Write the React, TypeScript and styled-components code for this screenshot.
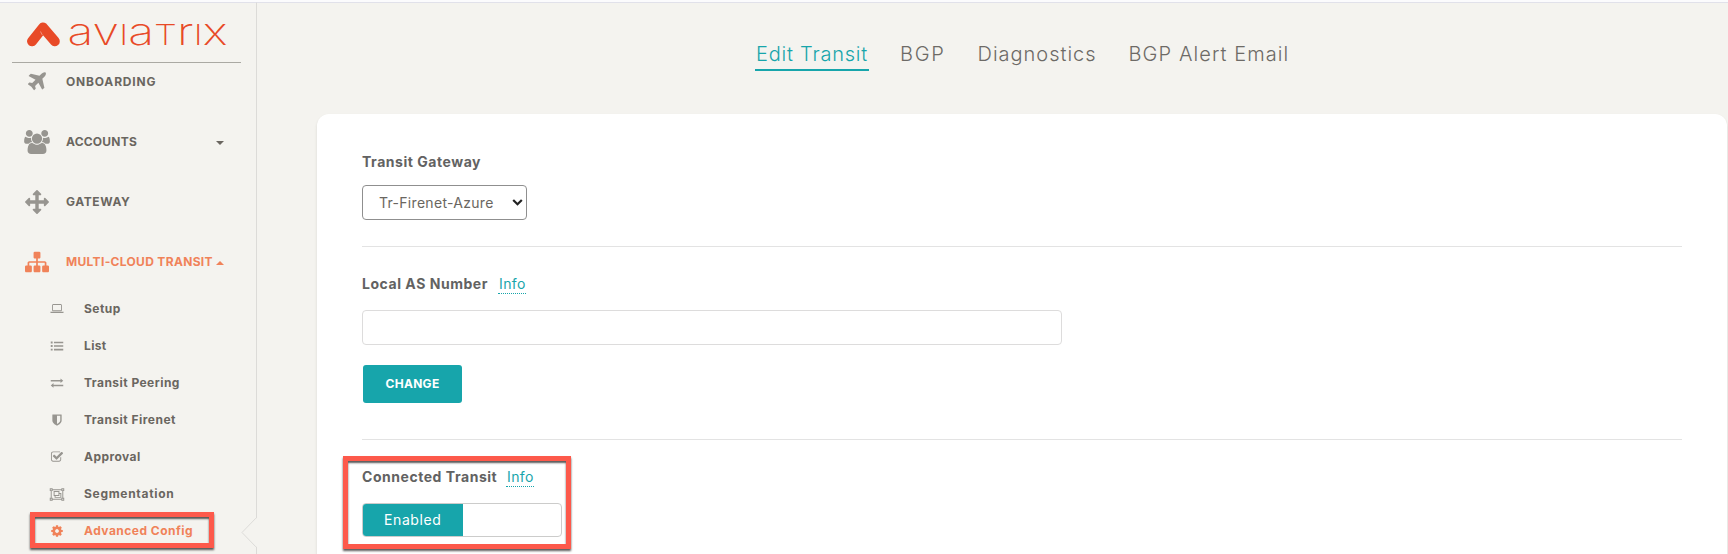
import React from 'react';
import styled, { createGlobalStyle } from 'styled-components';

const teal = '#17a5ab';
const orange = '#f08259';
const grey = '#6a6660';

const GlobalStyle = createGlobalStyle`
  * { box-sizing: border-box; }
  body {
    margin: 0;
    overflow: hidden;
    background: #f4f3ef;
    color: ${grey};
    font-family: Inter, "Open Sans", sans-serif;
  }
`;

const Page = styled.div`
  display: flex;
  height: 554px;
  overflow: hidden;
  border-top: 2px solid #fbfbfd;
  background: #f4f3ef;
`;

const Sidebar = styled.aside`
  position: relative;
  flex: none;
  width: 257px;
  border-top: 1px solid #e1e1ea;
  border-right: 1px solid #dcdbd8;
`;

const Brand = styled.header`
  height: 60px;
  margin: 0 15px 0 12px;
  border-bottom: 1px solid #aaa9a3;
  svg { display: block; }
`;

const Menu = styled.nav`
  display: flex;
  flex-direction: column;
  gap: 22px;
`;

const MenuItem = styled.a<{ $active?: boolean }>`
  display: flex;
  align-items: center;
  height: 38px;
  padding: 0 32px 0 22px;
  color: ${(p) => (p.$active ? orange : grey)};
  > svg { flex: none; margin-right: 14px; fill: ${(p) => (p.$active ? orange : '#979590')}; }
`;

const MenuLabel = styled.span<{ $spacing: number }>`
  padding-bottom: 2px;
  font-size: 12px;
  font-weight: 700;
  letter-spacing: ${(p) => p.$spacing}px;
  white-space: nowrap;
`;

const Caret = styled.i<{ $up?: boolean }>`
  margin-left: auto;
  margin-top: 2px;
  border: 4px solid transparent;
  ${(p) => (p.$up ? 'border-top: 0; border-bottom' : 'border-bottom: 0; border-top')}: 4px solid currentColor;
`;

const SubMenu = styled.div`
  margin-top: 9px;
`;

const SubItem = styled.a<{ $active?: boolean; $spacing: number }>`
  display: flex;
  align-items: center;
  height: 37px;
  padding-left: 49px;
  color: ${(p) => (p.$active ? orange : grey)};
  font-size: 12px;
  font-weight: 700;
  letter-spacing: ${(p) => p.$spacing}px;
  > svg { flex: none; margin-right: 19px; fill: ${(p) => (p.$active ? orange : '#979590')}; }
`;

const Notch = styled.svg`
  position: absolute;
  right: -1px;
  top: 513px;
`;

const Main = styled.main`
  flex: 1;
  display: flex;
  flex-direction: column;
  border-top: 1px solid #e1e1ea;
`;

const Tabs = styled.nav`
  display: flex;
  flex: none;
  gap: 30px;
  height: 111px;
  padding: 35px 0 0 498px;
`;

const Tab = styled.a<{ $active?: boolean; $spacing: number }>`
  height: 33px;
  padding: 0 1px;
  line-height: 33px;
  font-size: 20px;
  font-weight: 350;
  letter-spacing: ${(p) => p.$spacing}px;
  white-space: nowrap;
  color: ${(p) => (p.$active ? teal : '#6d6a66')};
  border-bottom: 2px solid ${(p) => (p.$active ? teal : 'transparent')};
`;

const Card = styled.section`
  flex: 1;
  margin: 0 1px 0 60px;
  padding: 0 45px;
  border-radius: 12px 12px 0 0;
  background: #fff;
  box-shadow: 0 2px 3px rgba(60, 55, 50, 0.14);
`;

const Field = styled.div<{ $height: number; $top: number }>`
  height: ${(p) => p.$height}px;
  padding-top: ${(p) => p.$top}px;
  border-bottom: 1px solid #e3e3e3;
  &:last-child { border-bottom: 0; }
`;

const LabelRow = styled.div`
  display: flex;
  height: 20px;
  line-height: 20px;
  font-size: 14px;
`;

const Label = styled.label<{ $width: number }>`
  width: ${(p) => p.$width}px;
  color: #626262;
  font-weight: 700;
  letter-spacing: 0.54px;
  white-space: nowrap;
`;

const InfoLink = styled.a`
  height: 20px;
  padding-left: 1px;
  color: ${teal};
  font-weight: 400;
  letter-spacing: 0.4px;
  border-bottom: 1px dotted ${teal};
`;

const SelectBox = styled.div`
  display: flex;
  align-items: center;
  justify-content: space-between;
  width: 165px;
  height: 35px;
  margin-top: 13px;
  padding: 0 3px 0 16px;
  border: 1px solid #8f8f8f;
  border-radius: 4px;
  font-size: 14px;
  letter-spacing: 0.3px;
`;

const TextInput = styled.input`
  display: block;
  width: 700px;
  height: 35px;
  margin-top: 16px;
  border: 1px solid #dddcdc;
  border-radius: 4px;
  outline: none;
`;

const Button = styled.button`
  display: block;
  width: 99px;
  height: 38px;
  margin: 20px 0 0 1px;
  padding: 0 0 2px;
  border: 0;
  border-radius: 3px;
  background: ${teal};
  color: #fff;
  font: 700 12px Inter, sans-serif;
  letter-spacing: 0.3px;
`;

const Toggle = styled.div`
  width: 200px;
  height: 34px;
  margin-top: 16px;
  border: 1px solid #cccccb;
  border-radius: 4px;
  overflow: hidden;
`;

const ToggleOn = styled.div`
  width: 100px;
  height: 32px;
  padding-left: 21px;
  background: ${teal};
  color: #fff;
  font-size: 14px;
  line-height: 32px;
  letter-spacing: 0.6px;
`;

const Highlight = styled.div<{ $x: number; $y: number; $w: number; $h: number }>`
  position: absolute;
  left: ${(p) => p.$x}px;
  top: ${(p) => p.$y}px;
  width: ${(p) => p.$w}px;
  height: ${(p) => p.$h}px;
  border: 5px solid #fd594b;
  box-shadow: 0 2px 2px rgba(0, 0, 0, 0.65), inset 0 2px 2px rgba(0, 0, 0, 0.65);
`;

const icons: Record<string, string> = {
  plane: 'M1568 160q44 52 12 148t-108 172l-161 161 160 696q5 19-12 33l-128 96q-7 6-19 6-4 0-7-1-15-3-21-16l-279-508-259 259 53 194q5 17-8 31l-96 96q-9 9-23 9h-2q-15-2-24-13l-189-252-252-189q-11-7-13-23-1-13 9-25l96-97q9-9 23-9 6 0 8 1l194 53 259-259-508-279q-14-8-17-24-2-16 9-27l128-128q14-13 30-8l665 159 160-160q76-76 172-108t148 12z',
  users: 'M593 896q-162 5-265 128h-134q-82 0-138-40.5t-56-118.5q0-353 124-353 6 0 43.5 21t97.5 42.5 119 21.5q67 0 133-23-5 37-5 66 0 139 81 256zm1071 637q0 120-73 189.500t-194 69.500h-874q-121 0-194-69.500t-73-189.500q0-53 3.5-103.500t14-109 26.5-108.500 43-97.500 62-81 85.500-53.500 111.500-20q10 0 43 21.500t73 48 107 48 135 21.500 135-21.500 107-48 73-48 43-21.500q61 0 111.500 20t85.500 53.500 62 81 43 97.500 26.500 108.500 14 109 3.500 103.500zm-1024-1277q0 106-75 181t-181 75-181-75-75-181 75-181 181-75 181 75 75 181zm704 384q0 159-112.500 271.500t-271.500 112.500-271.500-112.500-112.500-271.500 112.500-271.500 271.500-112.500 271.500 112.500 112.500 271.500zm576 225q0 78-56 118.500t-138 40.500h-134q-103-123-265-128 81-117 81-256 0-29-5-66 66 23 133 23 59 0 119-21.500t97.500-42.500 43.500-21q124 0 124 353zm-128-609q0 106-75 181t-181 75-181-75-75-181 75-181 181-75 181 75 75 181z',
  arrows: 'M1792 896q0 26-19 45l-256 256q-19 19-45 19t-45-19-19-45v-128h-384v384h128q26 0 45 19t19 45-19 45l-256 256q-19 19-45 19t-45-19l-256-256q-19-19-19-45t19-45 45-19h128v-384h-384v128q0 26-19 45t-45 19-45-19l-256-256q-19-19-19-45t19-45l256-256q19-19 45-19t45 19 19 45v128h384v-384h-128q-26 0-45-19t-19-45 19-45l256-256q19-19 45-19t45 19l256 256q19 19 19 45t-19 45-45 19h-128v384h384v-128q0-26 19-45t45-19 45 19l256 256q19 19 19 45z',
  sitemap: 'M1792 1248v320q0 40-28 68t-68 28h-320q-40 0-68-28t-28-68v-320q0-40 28-68t68-28h96v-192h-512v192h96q40 0 68 28t28 68v320q0 40-28 68t-68 28h-320q-40 0-68-28t-28-68v-320q0-40 28-68t68-28h96v-192h-512v192h96q40 0 68 28t28 68v320q0 40-28 68t-68 28h-320q-40 0-68-28t-28-68v-320q0-40 28-68t68-28h96v-192q0-52 38-90t90-38h512v-192h-96q-40 0-68-28t-28-68v-320q0-40 28-68t68-28h320q40 0 68 28t28 68v320q0 40-28 68t-68 28h-96v192h512q52 0 90 38t38 90v192h96q40 0 68 28t28 68z',
  laptop: 'M416 1216q-66 0-113-47t-47-113v-704q0-66 47-113t113-47h1088q66 0 113 47t47 113v704q0 66-47 113t-113 47h-1088zm-32-864v704q0 13 9.5 22.5t22.5 9.5h1088q13 0 22.5-9.5t9.5-22.5v-704q0-13-9.5-22.5t-22.500-9.500h-1088q-13 0-22.5 9.5t-9.5 22.5zm1376 928h160v96q0 40-47 68t-113 28h-1600q-66 0-113-28t-47-68v-96h1760z',
  list: 'M0 256h270v270h-270zM0 770h270v270h-270zM0 1284h270v270h-270zM460 275h1332v220h-1332zM460 790h1332v220h-1332zM460 1304h1332v220h-1332z',
  exchange: 'M0 460h1400v-220l392 330-392 330v-220h-1400zM1792 1130h-1400v-220l-392 330 392 330v-220h1400z',
  shield: 'M1344 960v-640h-448v1137q119-63 213-137 235-184 235-360zm192-768v768q0 86-33.500 170.500t-83 150-118 127.500-126.500 103-121 77.500-89.500 49.500-42.500 20q-12 6-26 6t-26-6q-16-7-42.500-20t-89.500-49.500-121-77.500-126.500-103-118-127.500-83-150-33.500-170.500v-768q0-26 19-45t45-19h1152q26 0 45 19t19 45z',
  check: 'M1472 930v318q0 119-84.500 203.500t-203.500 84.500h-832q-119 0-203.500-84.500t-84.500-203.500v-832q0-119 84.500-203.500t203.500-84.500h832q63 0 117 25 15 7 18 23 3 17-9 29l-49 49q-10 10-23 10-3 0-9-2-23-6-45-6h-832q-66 0-113 47t-47 113v832q0 66 47 113t113 47h832q66 0 113-47t47-113v-254q0-13 9-22l64-64q10-10 23-10 6 0 12 3 20 8 20 29zm231-489l-814 814q-24 24-57 24t-57-24l-430-430q-24-24-24-57t24-57l110-110q24-24 57-24t57 24l263 263 647-647q24-24 57-24t57 24l110 110q24 24 24 57t-24 57z',
  group: 'M0 128h384v128h1152v-128h384v384h-128v896h128v384h-384v-128h-1152v128h-384v-384h128v-896h-128zM256 512v896h128v128h1152v-128h128v-896h-128v-128h-1152v128zM128 256v128h128v-128zM1664 256v128h128v-128zM128 1536v128h128v-128zM1664 1536v128h128v-128zM512 512h768v256h256v640h-896v-256h-128zM640 640v384h512v-384zM1280 896v256h-512v128h640v-384z',
  cog: 'M1152 896q0-106-75-181t-181-75-181 75-75 181 75 181 181 75 181-75 75-181zm512-109v222q0 12-8 23t-20 13l-185 28q-19 54-39 91 35 50 107 138 10 12 10 25t-9 23q-27 37-99 108t-94 71q-12 0-26-9l-138-108q-44 23-91 38-16 136-29 186-7 28-36 28h-222q-14 0-24.500-8.500t-11.500-21.500l-28-184q-49-16-90-37l-141 107q-10 9-25 9-14 0-25-11-126-114-165-168-7-10-7-23 0-12 8-23 15-21 51-66.500t54-70.500q-27-50-41-99l-183-27q-13-2-21-12.500t-8-23.500v-222q0-12 8-23t19-13l186-28q14-46 39-92-40-57-107-138-10-12-10-24 0-10 9-23 26-36 98.500-107.500t94.500-71.500q13 0 26 10l138 107q44-23 91-38 16-136 29-186 7-28 36-28h222q14 0 24.500 8.500t11.500 21.500l28 184q49 16 90 37l142-107q9-9 24-9 13 0 25 10 129 119 165 170 7 8 7 22 0 12-8 23-15 21-51 66.500t-54 70.500q26 50 41 98l183 28q13 2 21 12.500t8 23.500z',
};

/* Glyphs that are 1920 units wide instead of 1792. */
const wide = new Set(['users', 'laptop', 'group']);

function Icon({ name, size, box }: { name: string; size: number; box: number }) {
  const vw = wide.has(name) ? 1920 : 1792;
  const vb = (box / size) * 1792;
  return (
    <svg width={box} height={box} viewBox={`${(vw - vb) / 2} ${(1792 - vb) / 2} ${vb} ${vb}`} fillRule="evenodd">
      <path d={icons[name]} />
    </svg>
  );
}

const subItems: [string, string, number, number][] = [
  ['laptop', 'Setup', 0.48, 12.5],
  ['list', 'List', 0.35, 12.5],
  ['exchange', 'Transit Peering', 0.46, 12.5],
  ['shield', 'Transit Firenet', 0.48, 13],
  ['check', 'Approval', 0.43, 13],
  ['group', 'Segmentation', 0.7, 13.5],
  ['cog', 'Advanced Config', 0.48, 13.5],
];

export default function App() {
  return (
    <>
      <GlobalStyle />
      <Page>
        <Sidebar>
          <Brand>
            <svg width="229" height="59" viewBox="12 3 229 59">
              <path d="M32 41.300 43 27.500 54.800 41.300" fill="none" stroke="#e84a27" strokeWidth="10" strokeLinecap="round" strokeLinejoin="round" />
              <path d="M40.500 31.500 42.300 35" stroke="#f4a08c" strokeWidth="0.8" />
              <text x="67.500" y="44.600" fontSize="37.500" fontWeight="250" fill="#e84a27" textLength="160" lengthAdjust="spacingAndGlyphs">
                av<tspan fontSize="28.500">I</tspan>a<tspan fontSize="28.500">T</tspan>r<tspan fontSize="28.500">I</tspan>x
              </text>
            </svg>
          </Brand>
          <Menu>
            <MenuItem><Icon name="plane" size={23} box={30} /><MenuLabel $spacing={0.82}>ONBOARDING</MenuLabel></MenuItem>
            <MenuItem><Icon name="users" size={24} box={30} /><MenuLabel $spacing={0.22}>ACCOUNTS</MenuLabel><Caret /></MenuItem>
            <MenuItem><Icon name="arrows" size={24} box={30} /><MenuLabel $spacing={0.6}>GATEWAY</MenuLabel></MenuItem>
            <MenuItem $active><Icon name="sitemap" size={24} box={30} /><MenuLabel $spacing={0.32}>MULTI-CLOUD TRANSIT</MenuLabel><Caret $up /></MenuItem>
          </Menu>
          <SubMenu>
            {subItems.map(([icon, text, spacing, size]) => (
              <SubItem key={text} $spacing={spacing} $active={icon === 'cog'}>
                <Icon name={icon} size={size} box={16} />{text}
              </SubItem>
            ))}
          </SubMenu>
          <Notch width="16" height="34" viewBox="0 0 16 34">
            <path d="M15.500 1.500 1 16.500 15.500 31.500V1.500" fill="#f4f3ef" />
            <path d="M16 1 1 16.500 16 32" fill="none" stroke="#dcdbd8" />
            <path d="M15.500 2.500V30.500" stroke="#f4f3ef" strokeWidth="1.500" />
          </Notch>
        </Sidebar>
        <Main>
          <Tabs>
            <Tab $active $spacing={0.78}>Edit Transit</Tab>
            <Tab $spacing={1.7}>BGP</Tab>
            <Tab $spacing={0.98}>Diagnostics</Tab>
            <Tab $spacing={1.08}>BGP Alert Email</Tab>
          </Tabs>
          <Card>
            <Field $height={133} $top={38}>
              <LabelRow><Label $width={130}>Transit Gateway</Label></LabelRow>
              <SelectBox>
                Tr-Firenet-Azure
                <svg width="11" height="9" viewBox="0 0 11 9"><path d="M1.200 2 5.500 6.200 9.800 2" fill="none" stroke="#222" strokeWidth="2.200" /></svg>
              </SelectBox>
            </Field>
            <Field $height={193} $top={27}>
              <LabelRow><Label $width={136}>Local AS Number</Label><InfoLink>Info</InfoLink></LabelRow>
              <TextInput />
              <Button>CHANGE</Button>
            </Field>
            <Field $height={113} $top={27}>
              <LabelRow><Label $width={144}>Connected Transit</Label><InfoLink>Info</InfoLink></LabelRow>
              <Toggle><ToggleOn>Enabled</ToggleOn></Toggle>
            </Field>
          </Card>
        </Main>
      </Page>
      <Highlight $x={30} $y={512} $w={184} $h={36} />
      <Highlight $x={343} $y={456} $w={228} $h={93} />
    </>
  );
}
